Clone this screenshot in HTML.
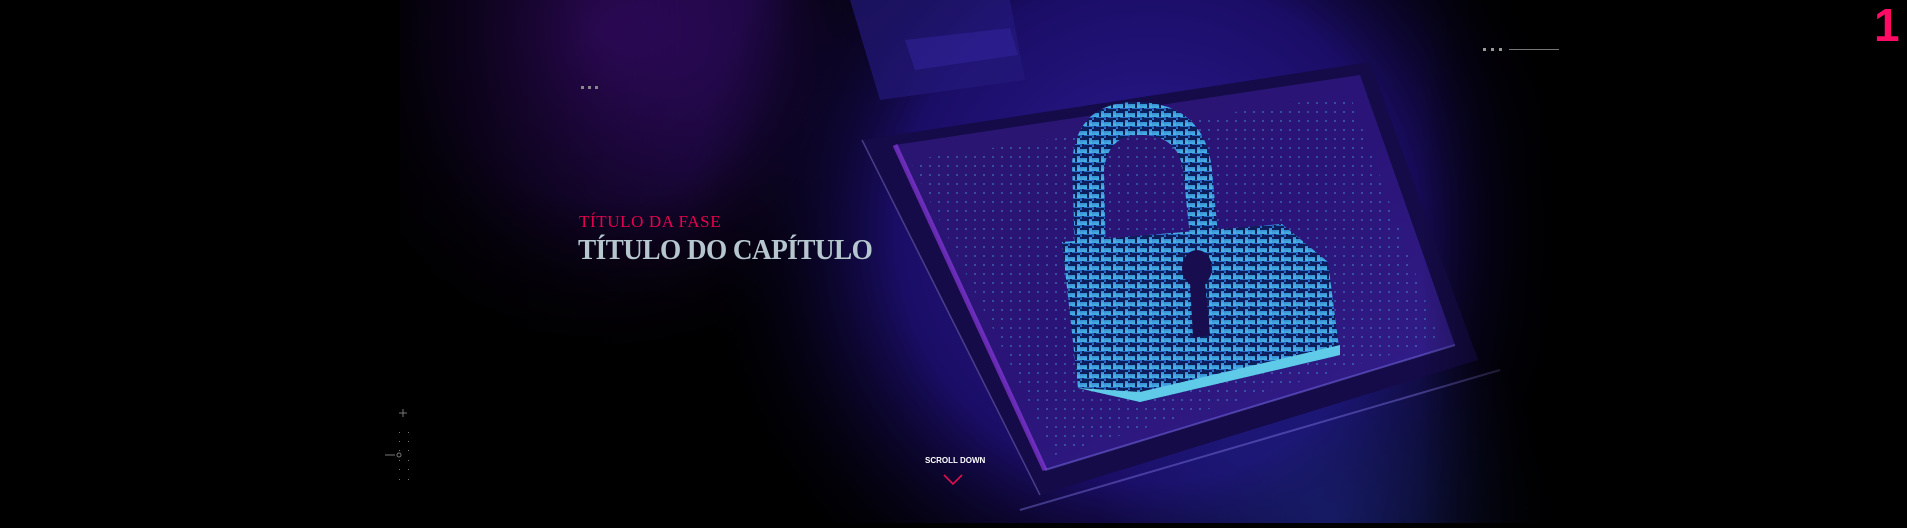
<!DOCTYPE html>
<html><head><meta charset="utf-8"><style>
html,body{margin:0;padding:0;width:1907px;height:523px;overflow:hidden;background:#000;}
.abs{position:absolute;}
</style></head><body>
<div class="abs" style="left:0;top:0;width:1907px;height:523px;">
<svg width="1907" height="523" viewBox="0 0 1907 523" xmlns="http://www.w3.org/2000/svg">
<defs>
 <radialGradient id="g1" cx="600" cy="30" r="340" gradientUnits="userSpaceOnUse">
  <stop offset="0" stop-color="#3d0c78"/><stop offset="0.5" stop-color="#1c0740"/><stop offset="1" stop-color="#000" stop-opacity="0"/>
 </radialGradient>
 <radialGradient id="g2" cx="1150" cy="230" r="460" gradientUnits="userSpaceOnUse">
  <stop offset="0" stop-color="#2c1c95"/><stop offset="0.55" stop-color="#1a0d66"/><stop offset="1" stop-color="#000" stop-opacity="0"/>
 </radialGradient>
 <radialGradient id="g3" cx="1330" cy="523" r="230" gradientUnits="userSpaceOnUse">
  <stop offset="0" stop-color="#1f2a90" stop-opacity="0.6"/><stop offset="1" stop-color="#1f2a90" stop-opacity="0"/>
 </radialGradient>
 <linearGradient id="fadeL" x1="0" x2="1"><stop offset="0" stop-color="#000"/><stop offset="1" stop-color="#000" stop-opacity="0"/></linearGradient>
 <linearGradient id="fadeR" x1="0" x2="1"><stop offset="0" stop-color="#000" stop-opacity="0"/><stop offset="1" stop-color="#000"/></linearGradient>
 <linearGradient id="chip" x1="0" y1="0" x2="1" y2="1">
  <stop offset="0" stop-color="#2a1670"/><stop offset="0.5" stop-color="#2a1478"/><stop offset="1" stop-color="#34208e"/>
 </linearGradient>
 <linearGradient id="lockg" x1="0" y1="0" x2="0.3" y2="1">
  <stop offset="0" stop-color="#1f56c0"/><stop offset="1" stop-color="#48b4e4"/>
 </linearGradient>
 <pattern id="dots" width="9" height="9" patternUnits="userSpaceOnUse">
  <rect x="2" y="3" width="2" height="2" fill="#4aa8e0" opacity="0.55"/>
 </pattern>
 <pattern id="traces" width="12" height="9" patternUnits="userSpaceOnUse">
  <rect width="12" height="9" fill="url(#lockg)"/>
  <path d="M0 4H8V9M3 0V2H12" stroke="#0d1f5a" stroke-width="2" fill="none"/>
 </pattern>
</defs>
<rect width="1907" height="523" fill="#000"/>
<rect x="300" y="0" width="800" height="420" fill="url(#g1)"/>
<rect x="650" y="0" width="1000" height="523" fill="url(#g2)"/>
<rect x="1100" y="290" width="460" height="233" fill="url(#g3)"/>
<path d="M850 0 L1010 0 L1025 80 L880 100 Z" fill="#23187a" opacity="0.7"/>
<path d="M905 40 L1010 28 L1018 55 L915 70 Z" fill="#3324a0" opacity="0.5"/>
<path d="M862 140 L1370 62 L1478 360 L1040 495 Z" fill="#150b48"/>
<path d="M895 145 L1360 75 L1455 345 L1045 470 Z" fill="url(#chip)"/>
<path d="M895 145 L1045 470" stroke="#9a3ff0" stroke-width="5" opacity="0.6"/>
<path d="M1045 470 L1455 345" stroke="#7a6ff0" stroke-width="2" opacity="0.5"/>
<path d="M862 140 L1040 495" stroke="#6c5fb0" stroke-width="1.5" opacity="0.6"/>
<path d="M1020 510 L1500 370" stroke="#8a80f0" stroke-width="2" opacity="0.4"/>
<path d="M910 160 L1350 95 L1440 340 L1055 455 Z" fill="url(#dots)" opacity="0.7"/>
<path d="M1075 250 L1072 165 Q1075 100 1140 102 Q1205 105 1212 170 L1218 235 L1190 237 L1183 170 Q1178 135 1140 135 Q1108 135 1104 170 L1106 260 Z" fill="url(#traces)"/>
<path d="M1062 242 L1282 224 L1328 262 L1340 355 L1140 402 L1078 388 Z" fill="url(#traces)"/>
<path d="M1078 388 L1140 402 L1340 355 L1340 345 L1140 392 Z" fill="#5fcbe8"/>
<ellipse cx="1197" cy="268" rx="15" ry="18" fill="#170d4f"/>
<path d="M1190 282 L1205 282 L1210 335 L1193 338 Z" fill="#170d4f"/>
<rect x="380" y="0" width="360" height="523" fill="url(#fadeL)" opacity="0.85"/>
<rect x="0" y="0" width="400" height="523" fill="#000"/>
<rect x="1420" y="0" width="160" height="523" fill="url(#fadeR)"/>
<rect x="1578" y="0" width="330" height="523" fill="#000"/>
<g fill="#888"><rect x="581" y="86" width="3" height="3"/><rect x="588" y="86" width="3" height="3"/><rect x="595" y="86" width="3" height="3"/></g>
<g fill="#999"><rect x="1483" y="48" width="3" height="3"/><rect x="1491" y="48" width="3" height="3"/><rect x="1499" y="48" width="3" height="3"/></g>
<rect x="1509" y="49" width="50" height="1" fill="#777"/>
<g stroke="#777" stroke-width="1" fill="none">
<path d="M403 409V417M399 413H407"/>
<path d="M385 455H395"/><circle cx="399" cy="455" r="2"/>
</g>
<g fill="#777">
<rect x="399" y="432" width="1" height="1"/><rect x="408" y="432" width="1" height="1"/>
<rect x="399" y="441" width="1" height="1"/><rect x="408" y="441" width="1" height="1"/>
<rect x="399" y="450" width="1" height="1"/><rect x="408" y="450" width="1" height="1"/>
<rect x="408" y="460" width="1" height="1"/><rect x="399" y="460" width="1" height="1"/>
<rect x="399" y="469" width="1" height="1"/><rect x="408" y="469" width="1" height="1"/>
<rect x="399" y="479" width="1" height="1"/><rect x="408" y="479" width="1" height="1"/>
</g>
<path d="M944 475 L953 484 L962 475" stroke="#e0104f" stroke-width="1.6" fill="none"/>
</svg>
</div>
<div class="abs" style="left:579px;top:212px;font:17px 'Liberation Serif',serif;color:#e8004f;letter-spacing:0.6px;">TÍTULO DA FASE</div>
<div class="abs" style="left:578px;top:234px;font:bold 29px 'Liberation Serif',serif;color:#b5c6cf;letter-spacing:-0.6px;white-space:nowrap;transform:scaleX(0.94);transform-origin:0 0;">TÍTULO DO CAPÍTULO</div>
<div class="abs" style="left:925px;top:456px;font:bold 8px 'Liberation Sans',sans-serif;color:#fff;">SCROLL DOWN</div>
<div class="abs" style="left:1874px;top:-2px;font:bold 46px 'Liberation Sans',sans-serif;color:#ff0a64;">1</div>
</body></html>
